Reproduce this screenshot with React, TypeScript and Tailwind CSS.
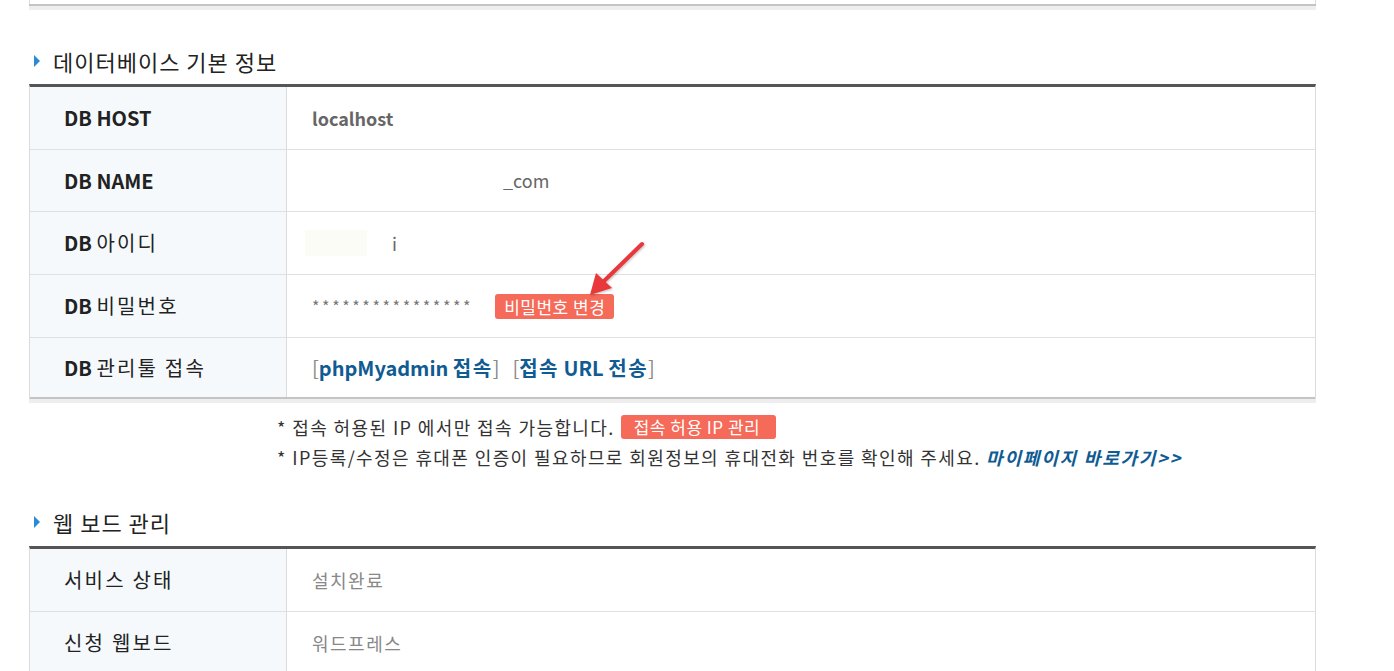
import React from 'react';

const font = { fontFamily: '"Noto Sans CJK KR", "Noto Sans", sans-serif' };

function SectionTitle({ children }: { children: React.ReactNode }) {
  return (
    <div className="flex items-center h-[24px]">
      <svg width="6" height="12" viewBox="0 0 6 12" className="ml-[5px] mr-[13px]">
        <polygon points="0,0 6,6 0,12" fill="#2b8ad8" />
      </svg>
      <span className="text-[22px] text-[#222] tracking-[1px] leading-none">{children}</span>
    </div>
  );
}

// Korean label part, widened to match the reference font metrics
function Ko({ children }: { children: React.ReactNode }) {
  return <span className="tracking-[2.2px]">{children}</span>;
}

function Row({ label, h, children }: { label: React.ReactNode; h: string; children: React.ReactNode }) {
  return (
    <div className={`flex border-b border-[#e0e0e0] ${h}`}>
      <div className="w-[257px] shrink-0 bg-[#f5f9fc] border-r border-[#dcdcdc] flex items-center pl-[34px] text-[20px] text-[#222]">
        {label}
      </div>
      <div className="flex-1 flex items-center pl-[25px] text-[18px]">{children}</div>
    </div>
  );
}

export default function App() {
  return (
    <div className="min-h-screen bg-white relative overflow-hidden" style={font}>
      {/* top remnant of previous panel */}
      <div className="ml-[29px] w-[1287px]">
        <div className="h-[4px] border-l border-r border-[#dcdcdc]" />
        <div className="h-[2px] bg-[#c4c4c4]" />
        <div className="h-[4px] bg-[#eeeeee]" />
      </div>

      <div className="ml-[29px] w-[1287px] mt-[39px]">
        <SectionTitle>데이터베이스 기본 정보</SectionTitle>

        <div className="mt-[11px] border-t-[3px] border-x border-x-[#dcdcdc] border-t-[#555]">
          <Row label={<b className="font-bold">DB HOST</b>} h="h-[63px]">
            <span className="font-bold text-[#666]">localhost</span>
          </Row>
          <Row label={<b className="font-bold">DB NAME</b>} h="h-[62px]">
            <span className="pl-[191px] text-[#666]">_com</span>
          </Row>
          <Row
            label={
              <span>
                <b className="font-bold">DB</b> <Ko>아이디</Ko>
              </span>
            }
            h="h-[63px]"
          >
            <span className="-ml-[7px] w-[62px] h-[26px] bg-[#fcfcf7]" />
            <span className="ml-[25px] text-[#666]">i</span>
          </Row>
          <Row
            label={
              <span>
                <b className="font-bold">DB</b> <Ko>비밀번호</Ko>
              </span>
            }
            h="h-[63px]"
          >
            <span className="text-[#777] tracking-[2.6px] text-[16px]">****************</span>
            <span className="ml-[22px] bg-[#f56a58] text-white text-[17px] tracking-[0.5px] leading-[25px] px-[9px] rounded-[3px]">
              비밀번호 변경
            </span>
          </Row>
          <div className="flex h-[61px] border-b-2 border-[#c4c4c4]">
            <div className="w-[257px] shrink-0 bg-[#f5f9fc] border-r border-[#dcdcdc] flex items-center pl-[34px] text-[20px] text-[#222]">
              <span>
                <b className="font-bold">DB</b> <Ko>관리툴 접속</Ko>
              </span>
            </div>
            <div className="flex-1 flex items-center pl-[25px] text-[20px]">
              <span className="text-[#888]">[</span>
              <span className="font-bold text-[#0f5b92]">
                phpMyadmin <span className="tracking-[1.5px]">접속</span>
              </span>
              <span className="text-[#888]">]</span>
              <span className="text-[#888] ml-[13px]">[</span>
              <span className="font-bold text-[#0f5b92]">
                <span className="tracking-[1.5px]">접속</span> URL <span className="tracking-[1.5px]">전송</span>
              </span>
              <span className="text-[#888]">]</span>
            </div>
          </div>
        </div>
        <div className="h-[4px] bg-[#eeeeee]" />

        <div className="pl-[248px] pt-[9px] text-[18px] tracking-[1.4px] text-[#333] leading-[30px]">
          <div className="flex items-center">
            <span>* 접속 허용된 IP 에서만 접속 가능합니다.</span>
            <span className="ml-[6px] bg-[#f56a58] text-white text-[17px] tracking-[0.5px] leading-[24px] pl-[13px] rounded-[3px] w-[155px]">
              접속 허용 IP 관리
            </span>
          </div>
          <div>
            * IP등록/수정은 휴대폰 인증이 필요하므로 회원정보의 휴대전화 번호를 확인해 주세요.{' '}
            <i className="font-bold text-[#0f5b92] tracking-[1.8px]">마이페이지 바로가기&gt;&gt;</i>
          </div>
        </div>

        <div className="mt-[38px]">
          <SectionTitle>웹 보드 관리</SectionTitle>
        </div>

        <div className="mt-[12px] border-t-[3px] border-x border-x-[#dcdcdc] border-t-[#555]">
          <Row label={<Ko>서비스 상태</Ko>} h="h-[63px]">
            <span className="text-[#888] tracking-[1.5px]">설치완료</span>
          </Row>
          <Row label={<Ko>신청 웹보드</Ko>} h="h-[63px]">
            <span className="text-[#888] tracking-[1.5px]">워드프레스</span>
          </Row>
        </div>
      </div>

      {/* annotation arrow */}
      <svg
        className="absolute left-[580px] top-[235px] pointer-events-none"
        width="80"
        height="70"
        viewBox="0 0 80 70"
      >
        <defs>
          <filter id="sh" x="-20%" y="-20%" width="140%" height="140%">
            <feDropShadow dx="1" dy="1" stdDeviation="1" floodColor="#000" floodOpacity="0.25" />
          </filter>
        </defs>
        <g filter="url(#sh)">
          <line x1="62" y1="9" x2="22" y2="48" stroke="#e8373a" strokeWidth="4" strokeLinecap="round" />
          <polygon points="10,60 16,38 32,53" fill="#e8373a" />
        </g>
      </svg>
    </div>
  );
}
